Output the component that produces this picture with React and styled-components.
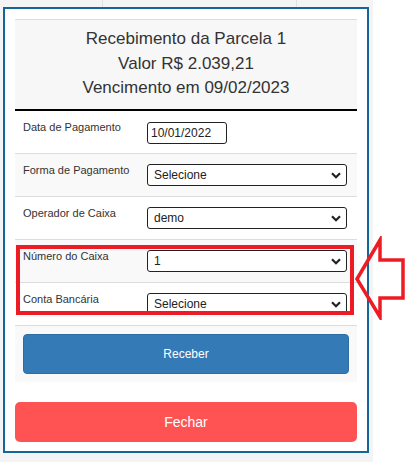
import React from "react";
import styled, { createGlobalStyle } from "styled-components";

const GlobalStyle = createGlobalStyle`
    body {
        margin: 0;
        background: #fff;
        font-family: "Liberation Sans", Arial, sans-serif;
        color: #333;
    }
`

const fields = [
    { label: "Data de Pagamento", kind: "date", value: "10/01/2022" },
    { label: "Forma de Pagamento", kind: "select", value: "Selecione" },
    { label: "Operador de Caixa", kind: "select", value: "demo" },
    { label: "Número do Caixa", kind: "select", value: "1" },
    { label: "Conta Bancária", kind: "select", value: "Selecione" },
]

const Chevron = () => (
    <ChevronIcon width="10" height="7" viewBox="0 0 10 7">
        <path d="M1 1.2 L5 5.2 L9 1.2" fill="none" stroke="#222" strokeWidth="2.2" />
    </ChevronIcon>
)

const App = () => {
    return (
        <Page>
            <GlobalStyle />
            <Backdrop>
                <Modal>
                    <Panel>
                        <Heading>
                            <div>Recebimento da Parcela 1</div>
                            <div>Valor R$ 2.039,21</div>
                            <div>Vencimento em 09/02/2023</div>
                        </Heading>
                        {fields.map((f, i) => (
                            <Row key={f.label} striped={i % 2 === 1}>
                                <Label>{f.label}</Label>
                                {f.kind === "date" ? (
                                    <DateBox>{f.value}</DateBox>
                                ) : (
                                    <SelectBox>
                                        <span>{f.value}</span>
                                        <Chevron />
                                    </SelectBox>
                                )}
                            </Row>
                        ))}
                        <ActionRow>
                            <PrimaryButton>Receber</PrimaryButton>
                        </ActionRow>
                    </Panel>
                    <CloseButton>Fechar</CloseButton>
                </Modal>
            </Backdrop>
            <Highlight />
            <Arrow width="52" height="84" viewBox="0 0 52 84">
                <polygon
                    points="3,43 26,4 26,24 49,24 49,62 26,62 26,81"
                    fill="none"
                    stroke="#ed1c24"
                    strokeWidth="3.5"
                    strokeLinejoin="miter"
                />
            </Arrow>
        </Page>
    )
}

const Page = styled.div`
    position: relative;
    width: 410px;
    height: 463px;
    overflow: hidden;
`

const Backdrop = styled.div`
    width: 373px;
    padding: 7px 4px 9px 3px;
    box-sizing: border-box;
    background-color: #f4f4f4;
    background-image:
        linear-gradient(#e2e2e2, #e2e2e2),
        linear-gradient(#e2e2e2, #e2e2e2);
    background-size: 1px 7px, 1px 7px;
    background-position: 102px 0, 296px 0;
    background-repeat: no-repeat;
`

const Modal = styled.div`
    border: 2px solid #14659a;
    background: #fff;
    padding: 10px 10px 9px 10px;
`

const Panel = styled.div`
    border-top: 1px solid #dddddd;
`

const Heading = styled.div`
    background: #f7f7f7;
    border-bottom: 2px solid #000;
    text-align: center;
    font-size: 17px;
    line-height: 24.5px;
    color: #333;
    padding: 7px 0 8px;
`

const Row = styled.div`
    display: flex;
    align-items: flex-start;
    height: 42px;
    box-sizing: border-box;
    padding: 8px 8px 0 8px;
    background: ${p => (p.striped ? "#f9f9f9" : "#fff")};
    & + & {
        border-top: 1px solid #dddddd;
        height: 43px;
    }
`

const Label = styled.div`
    width: 124px;
    font-size: 11px;
    line-height: 16px;
    color: #333;
`

const DateBox = styled.div`
    width: 80px;
    height: 22px;
    margin-top: 3px;
    box-sizing: border-box;
    border: 1px solid #222;
    border-radius: 3px;
    background: #fff;
    font-size: 12px;
    line-height: 20px;
    padding-left: 3px;
    color: #222;
`

const SelectBox = styled.div`
    position: relative;
    width: 200px;
    height: 22px;
    margin-top: 2px;
    box-sizing: border-box;
    border: 1px solid #222;
    border-radius: 3px;
    background: #fff;
    font-size: 12px;
    line-height: 20px;
    padding-left: 6px;
    color: #222;
`

const ChevronIcon = styled.svg`
    position: absolute;
    right: 5px;
    top: 7px;
`

const ActionRow = styled.div`
    border-top: 1px solid #dddddd;
    background: #f9f9f9;
    padding: 8px;
`

const PrimaryButton = styled.div`
    height: 40px;
    box-sizing: border-box;
    border: 1px solid #2e6da4;
    border-radius: 4px;
    background: #337ab7;
    color: #fff;
    font-size: 12px;
    display: flex;
    align-items: center;
    justify-content: center;
`

const CloseButton = styled.div`
    margin-top: 20px;
    height: 40px;
    border-radius: 5px;
    background: #ff5252;
    color: #fff;
    font-size: 14px;
    display: flex;
    align-items: center;
    justify-content: center;
`

const Highlight = styled.div`
    position: absolute;
    left: 16px;
    top: 245px;
    width: 338px;
    height: 70px;
    box-sizing: border-box;
    border: 4px solid #ed1c24;
`

const Arrow = styled.svg`
    position: absolute;
    left: 354px;
    top: 236px;
`

export default App;
